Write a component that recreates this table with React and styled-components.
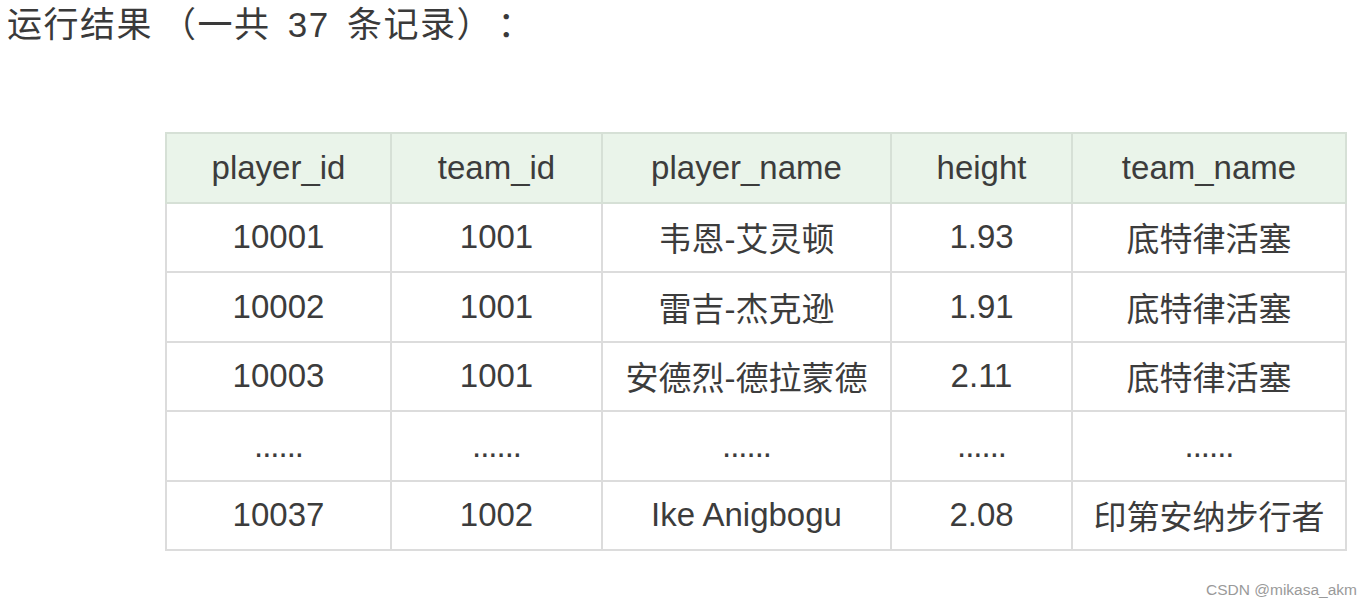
import React from "react";
import styled, { createGlobalStyle } from "styled-components";

const GlobalStyle = createGlobalStyle`
    body {
        margin: 0;
        background: #fff;
        font-family: "Liberation Sans", "Noto Sans CJK SC", sans-serif;
        color: #333;
    }
`;

const Page = styled.div`
    position: relative;
    width: 1372px;
    height: 606px;
    overflow: hidden;
`;

const Title = styled.div`
    padding: 5px 0 0 7px;
    height: 132px;
    box-sizing: border-box;
    font-size: 35px;
    line-height: 40px;
    color: #3a3a3a;
    letter-spacing: 1.5px;
    word-spacing: 6px;
`;

const Paren = styled.span`
    margin: ${(p) => (p.$open ? "0 0 0 8px" : "0 22px 0 0")};
`;

const Table = styled.table`
    margin-left: 165px;
    width: 1180px;
    table-layout: fixed;
    border-collapse: collapse;
    font-size: 33px;
    color: #3c3c3c;
`;

const Row = styled.tr`
    height: 69.5px;
`;

const Head = styled.th`
    font-weight: normal;
    background: #eaf4ea;
    border: 2px solid #d6e0d6;
    text-align: center;
    padding: 0;
`;

const Cell = styled.td`
    border: 2px solid #dcdcdc;
    text-align: center;
    padding: 0;
    letter-spacing: ${(p) => (p.$dots ? "-1px" : "normal")};
`;

const Watermark = styled.div`
    position: absolute;
    right: 15px;
    bottom: 7px;
    font-size: 15.5px;
    color: #9a9a9a;
`;

const columns = [
    { name: "player_id", width: 225 },
    { name: "team_id", width: 211 },
    { name: "player_name", width: 289 },
    { name: "height", width: 181 },
    { name: "team_name", width: 274 },
];

const rows = [
    ["10001", "1001", "韦恩-艾灵顿", "1.93", "底特律活塞"],
    ["10002", "1001", "雷吉-杰克逊", "1.91", "底特律活塞"],
    ["10003", "1001", "安德烈-德拉蒙德", "2.11", "底特律活塞"],
    ["......", "......", "......", "......", "......"],
    ["10037", "1002", "Ike Anigbogu", "2.08", "印第安纳步行者"],
];

export default function App() {
    return (
        <Page>
            <GlobalStyle />
            <Title lang="zh-CN">
                运行结果<Paren $open>（</Paren>一共 37 条记录<Paren>）</Paren>：
            </Title>
            <Table>
                <colgroup>
                    {columns.map((c) => (
                        <col key={c.name} style={{ width: c.width }} />
                    ))}
                </colgroup>
                <thead>
                    <Row>
                        {columns.map((c) => (
                            <Head key={c.name}>{c.name}</Head>
                        ))}
                    </Row>
                </thead>
                <tbody>
                    {rows.map((r, i) => (
                        <Row key={i}>
                            {r.map((v, j) => (
                                <Cell key={j} $dots={v === "......"}>
                                    {v}
                                </Cell>
                            ))}
                        </Row>
                    ))}
                </tbody>
            </Table>
            <Watermark>CSDN @mikasa_akm</Watermark>
        </Page>
    );
}
